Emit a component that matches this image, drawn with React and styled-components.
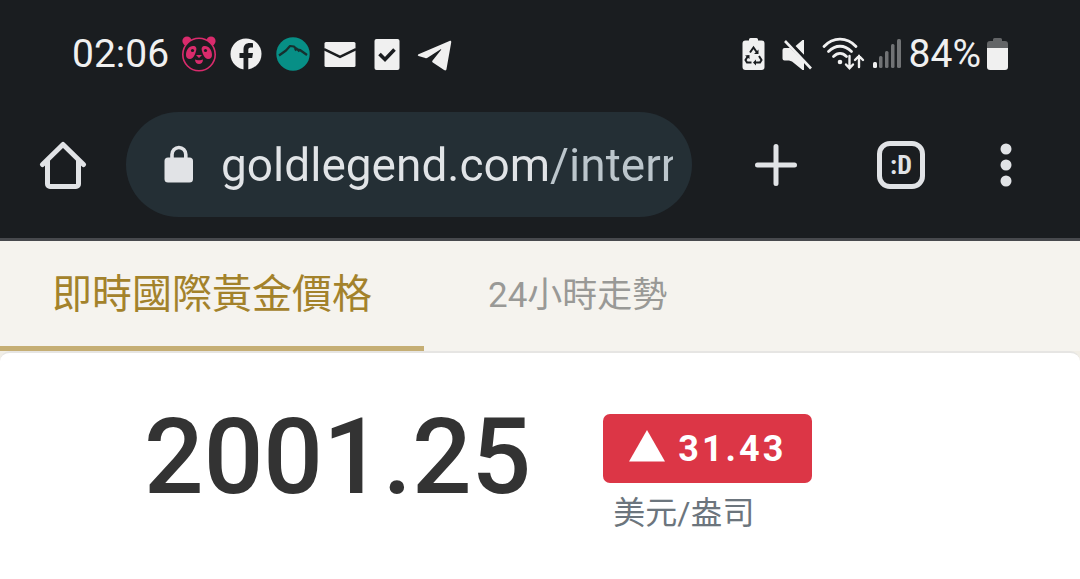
import React, { useState } from "react";
import styled, { createGlobalStyle } from "styled-components";

const GlobalStyle = createGlobalStyle`
  * { box-sizing: border-box; }
  body {
    margin: 0;
    background: #ffffff;
    font-family: Roboto, "Noto Sans CJK TC", sans-serif;
  }
  button, input { font: inherit; border: 0; padding: 0; margin: 0; background: none; }
`;

const BrowserChrome = styled.header`
  background: #1a1d20;
  border-bottom: 3px solid #47494d;
`;

const StatusBar = styled.div`
  display: flex;
  align-items: center;
  justify-content: space-between;
  height: 108px;
  padding: 0 72px;
  color: #f0f0f0;
  font-size: 39px;
  line-height: 48px;
`;

const StatusGroup = styled.div`
  display: flex;
  align-items: center;
  gap: ${(p) => p.$gap}px;
`;

const Icon = styled.svg`
  display: block;
  flex: none;
  fill: currentColor;
`;

const Toolbar = styled.div`
  display: flex;
  align-items: center;
  padding: 4px 32px 21px 35px;
  color: #e1e3e6;
`;

const ToolButton = styled.button`
  display: flex;
  align-items: center;
  justify-content: center;
  flex: none;
  width: ${(p) => p.$width}px;
  height: 56px;
  color: inherit;
`;

const AddressBar = styled.label`
  display: flex;
  align-items: center;
  gap: 27px;
  flex: 1;
  min-width: 0;
  height: 105px;
  margin: 0 22px 0 35px;
  padding: 0 19px 0 38px;
  border-radius: 53px;
  background: #242f35;
`;

const AddressInput = styled.input`
  flex: 1;
  min-width: 0;
  height: 64px;
  font-size: 46px;
  line-height: 64px;
  color: transparent;
  background: linear-gradient(to right, #e1e4e7 328px, #bcc6cc 328px);
  background-clip: text;
  -webkit-background-clip: text;
  outline: none;
`;

const TabList = styled.nav`
  display: flex;
  background: #f5f3ee;
`;

const Tab = styled.button`
  height: 110px;
  padding: ${(p) => (p.$active ? "2px 52px 0" : "4px 64px 0")};
  border-bottom: 5px solid ${(p) => (p.$active ? "#c5ae74" : "transparent")};
  color: ${(p) => (p.$active ? "#a3822b" : "#999996")};
  font-size: ${(p) => (p.$active ? 40 : 35)}px;
  line-height: 48px;
  white-space: nowrap;
`;

const CardBackdrop = styled.div`
  background: #f1eee6;
`;

const QuoteCard = styled.main`
  display: flex;
  align-items: flex-start;
  gap: 72px;
  padding: 61px 144px 48px;
  border-top: 2px solid #e6e5e3;
  border-radius: 10px 10px 0 0;
  background: #ffffff;
`;

const Price = styled.strong`
  color: #333333;
  font-size: 105px;
  font-weight: 500;
  line-height: 88px;
`;

const Change = styled.div`
  display: flex;
  flex-direction: column;
  gap: 9px;
`;

const Badge = styled.span`
  display: flex;
  align-items: center;
  gap: 13px;
  height: 69px;
  padding: 0 26px;
  border-radius: 7px;
  background: #dc3646;
  color: #ffffff;
  font-size: 36px;
  font-weight: 700;
  letter-spacing: 3px;
`;

const Unit = styled.span`
  padding-left: 10px;
  color: #6c757d;
  font-size: 32px;
  line-height: 42px;
`;

const PandaIcon = () => (
  <Icon width="36" height="36" viewBox="0 0 36 36" color="#d92b6c" aria-hidden="true">
    <circle cx="6" cy="5" r="4.6" />
    <circle cx="30" cy="5" r="4.6" />
    <circle cx="18" cy="18.5" r="16.2" fill="#1a1d20" stroke="currentColor" strokeWidth="1.6" />
    <path d="M5 19c0-5 3-9 7-9 3 0 4 2 3 5-1 4-3 8-6 8-3 0-4-2-4-4z" />
    <path d="M31 19c0-5-3-9-7-9-3 0-4 2-3 5 1 4 3 8 6 8 3 0 4-2 4-4z" />
    <circle cx="11.5" cy="14.5" r="1.6" fill="#1a1d20" />
    <circle cx="24.5" cy="14.5" r="1.6" fill="#1a1d20" />
    <path d="M15 19h6l-3 3zM14 23.5c2 1 6 1 8 0 0 3-2 4.500-4 4.500s-4-1.500-4-4.500z" />
  </Icon>
);

const FacebookIcon = () => (
  <Icon width="36" height="36" viewBox="0 0 36 36" aria-hidden="true">
    <circle cx="18" cy="18" r="15.500" />
    <path fill="#1a1d20" d="M15.500 34V22h-4v-5h4v-3.500c0-4.500 2.500-6.500 6.300-6.500 1.300 0 2.500.1 3.200.3v4.200h-2.200c-2 0-2.500 1-2.500 2.500v3h4.700l-.8 5h-3.900v12z" />
  </Icon>
);

const MountainIcon = () => (
  <Icon width="36" height="36" viewBox="0 0 36 36" aria-hidden="true">
    <circle cx="18" cy="18" r="16.700" fill="#078f86" />
    <path fill="none" stroke="#16302f" strokeWidth="2.200" strokeLinejoin="round" d="M4 19.500l7-5 4-4.500 4 .5 2 2.500 4 1 7 5M20 14.500l1.500-2 3 3" />
  </Icon>
);

const MailIcon = () => (
  <Icon width="36" height="36" viewBox="0 0 36 36" aria-hidden="true">
    <rect x="2.500" y="6" width="31" height="25" rx="1.500" />
    <path fill="none" stroke="#1a1d20" strokeWidth="2.600" d="M2 13.200l16 7.600 16-7.600" />
  </Icon>
);

const TaskIcon = () => (
  <Icon width="36" height="36" viewBox="0 0 36 36" aria-hidden="true">
    <rect x="5.500" y="3" width="25" height="31" rx="2" />
    <path fill="none" stroke="#1a1d20" strokeWidth="3.600" d="M10.500 18l5.500 5.500L25.500 13.500" />
  </Icon>
);

const TelegramIcon = () => (
  <Icon width="36" height="36" viewBox="0 0 36 36" aria-hidden="true">
    <path d="M2.500 18.300L33.500 5c1.200-.5 2 .2 1.700 1.500L30.500 33c-.2 1.500-1.200 1.800-2.400 1l-11.300-7.500c-.8-.6-.8-1.300-.2-2L25 14c.5-.7 0-1.100-.7-.6L11.500 21.800c-.8.5-1.400.5-2.200.2L2.500 20c-1-.4-1-1.200 0-1.700z" />
  </Icon>
);

const RecycleBatteryIcon = () => (
  <Icon width="32" height="36" viewBox="0 0 32 36" aria-hidden="true">
    <path d="M7 4.500V3.500a1.500 1.500 0 011.500-1.500h6A1.500 1.500 0 0116 3.500v1h3.500a3 3 0 013 3V31a3 3 0 01-3 3h-16a3 3 0 01-3-3V7.500a3 3 0 013-3z" />
    <g fill="none" stroke="#1a1d20" strokeWidth="2">
      <path d="M8 16.500l3.500-5 3.500 5M17 20l2.500 4-1.500 2.500h-5M9.500 26.500H5L3.500 24 6 20" />
    </g>
    <path fill="#1a1d20" d="M16.500 13.500v4.500H12zM14 23.500v6l-3-3zM3 19.500l4.500-.5v4z" />
  </Icon>
);

const MuteIcon = () => (
  <Icon width="32" height="36" viewBox="0 0 32 36" aria-hidden="true">
    <path d="M2.500 12H8L22 26v8h-1.500L10 25.500 7 24.500H2.500A2 2 0 01.5 22.500V14a2 2 0 012-2zM13 10.500l7.500-6.500H22v15z" />
    <path fill="none" stroke="#1a1d20" strokeWidth="2" d="M5 2.500L31 30" />
    <path fill="none" stroke="currentColor" strokeWidth="2.600" d="M3 5L29 32.500" />
  </Icon>
);

const WifiIcon = () => (
  <Icon width="43" height="36" viewBox="0 0 43 36" aria-hidden="true">
    <g fill="none" stroke="currentColor" strokeWidth="2.800" strokeLinecap="round">
      <path d="M2 10.500C11 .7 25 .7 34 10.500M6.500 15.500c7-7 16-7 23 0M11.500 20.500c4-4 9-4 13 0" />
      <path strokeWidth="2.400" d="M27.500 20V32M24 28.500l3.500 3.800 3.500-3.800M37 31V20M33 24l4-4 4 4" />
    </g>
    <circle cx="18" cy="26" r="2.300" />
  </Icon>
);

const SignalIcon = () => (
  <Icon width="28" height="36" viewBox="0 0 28 36" aria-hidden="true">
    <rect x="0" y="26" width="4" height="6" rx="1.500" />
    <g fill="#717375">
      <rect x="6" y="20" width="3.500" height="12" rx="1.500" />
      <rect x="12" y="15" width="3.500" height="17" rx="1.500" />
      <rect x="18" y="8" width="3.500" height="24" rx="1.500" />
      <rect x="24" y="3" width="4" height="29" rx="1.500" />
    </g>
  </Icon>
);

const BatteryIcon = () => (
  <Icon width="21" height="36" viewBox="0 0 21 36" aria-hidden="true">
    <path fill="#636567" d="M6 5V3.500A1.500 1.500 0 017.500 2h6A1.500 1.500 0 0115 3.500V5h3a3 3 0 013 3v5H0V8a3 3 0 013-3z" />
    <path d="M0 12h21v19a3 3 0 01-3 3H3a3 3 0 01-3-3z" />
  </Icon>
);

const HomeIcon = () => (
  <Icon width="48" height="48" viewBox="0 0 48 48" aria-hidden="true">
    <path fill="none" stroke="currentColor" strokeWidth="5" strokeLinecap="round" strokeLinejoin="round" d="M3.500 23.500L24 3.500l20.500 20M8.500 20v23a2.500 2.500 0 002.500 2.500h26a2.500 2.500 0 002.500-2.500V20" />
  </Icon>
);

const LockIcon = () => (
  <Icon width="30" height="42" viewBox="0 0 30 42" color="#e1e3e6" aria-hidden="true">
    <rect x="0.500" y="13.500" width="28.500" height="25" rx="3.500" />
    <path fill="none" stroke="currentColor" strokeWidth="3.600" d="M8 14.500V10.500a6.900 7 0 0113.800 0v4" />
  </Icon>
);

const PlusIcon = () => (
  <Icon width="44" height="44" viewBox="0 0 44 44" aria-hidden="true">
    <path stroke="currentColor" strokeWidth="5" strokeLinecap="round" d="M22 3.500v37M3.500 22h37" />
  </Icon>
);

const DotsIcon = () => (
  <Icon width="12" height="44" viewBox="0 0 12 44" aria-hidden="true">
    <circle cx="6" cy="6" r="5.500" />
    <circle cx="6" cy="22" r="5.500" />
    <circle cx="6" cy="38" r="5.500" />
  </Icon>
);

const TabCount = styled.span`
  display: flex;
  align-items: center;
  justify-content: center;
  width: 48px;
  height: 48px;
  border: 5px solid currentColor;
  border-radius: 13px;
  font-family: "Roboto Condensed", Roboto, sans-serif;
  font-size: 26px;
  font-weight: 700;
  line-height: 38px;
`;

const TriangleIcon = () => (
  <Icon width="36" height="37" viewBox="0 0 36 37" aria-hidden="true">
    <path d="M18 0l18 31.500H0z" />
  </Icon>
);

const tabs = ["即時國際黃金價格", "24小時走勢"];

export default function App() {
  const [active, setActive] = useState(0);
  const [address, setAddress] = useState("goldlegend.com/international");

  return (
    <>
      <GlobalStyle />
      <BrowserChrome>
        <StatusBar>
          <StatusGroup $gap={12}>
            <span>02:06</span>
            <StatusGroup $gap={11}>
              <PandaIcon />
              <FacebookIcon />
              <MountainIcon />
              <MailIcon />
              <TaskIcon />
              <TelegramIcon />
            </StatusGroup>
          </StatusGroup>
          <StatusGroup $gap={8}>
            <RecycleBatteryIcon />
            <MuteIcon />
            <WifiIcon />
            <SignalIcon />
            <StatusGroup $gap={6}>
              <span>84%</span>
              <BatteryIcon />
            </StatusGroup>
          </StatusGroup>
        </StatusBar>
        <Toolbar>
          <ToolButton $width={56} aria-label="Home"><HomeIcon /></ToolButton>
          <AddressBar>
            <LockIcon />
            <AddressInput
              aria-label="Address"
              value={address}
              spellCheck={false}
              onChange={(e) => setAddress(e.target.value)}
            />
          </AddressBar>
          <ToolButton $width={124} aria-label="New tab"><PlusIcon /></ToolButton>
          <ToolButton $width={126} aria-label="Open tabs"><TabCount>:D</TabCount></ToolButton>
          <ToolButton $width={84} aria-label="Menu"><DotsIcon /></ToolButton>
        </Toolbar>
      </BrowserChrome>
      <TabList>
        {tabs.map((label, i) => (
          <Tab key={label} $active={i === active} onClick={() => setActive(i)}>{label}</Tab>
        ))}
      </TabList>
      <CardBackdrop>
        <QuoteCard>
          <Price>2001.25</Price>
          <Change>
            <Badge><TriangleIcon />31.43</Badge>
            <Unit>美元/盎司</Unit>
          </Change>
        </QuoteCard>
      </CardBackdrop>
    </>
  );
}
